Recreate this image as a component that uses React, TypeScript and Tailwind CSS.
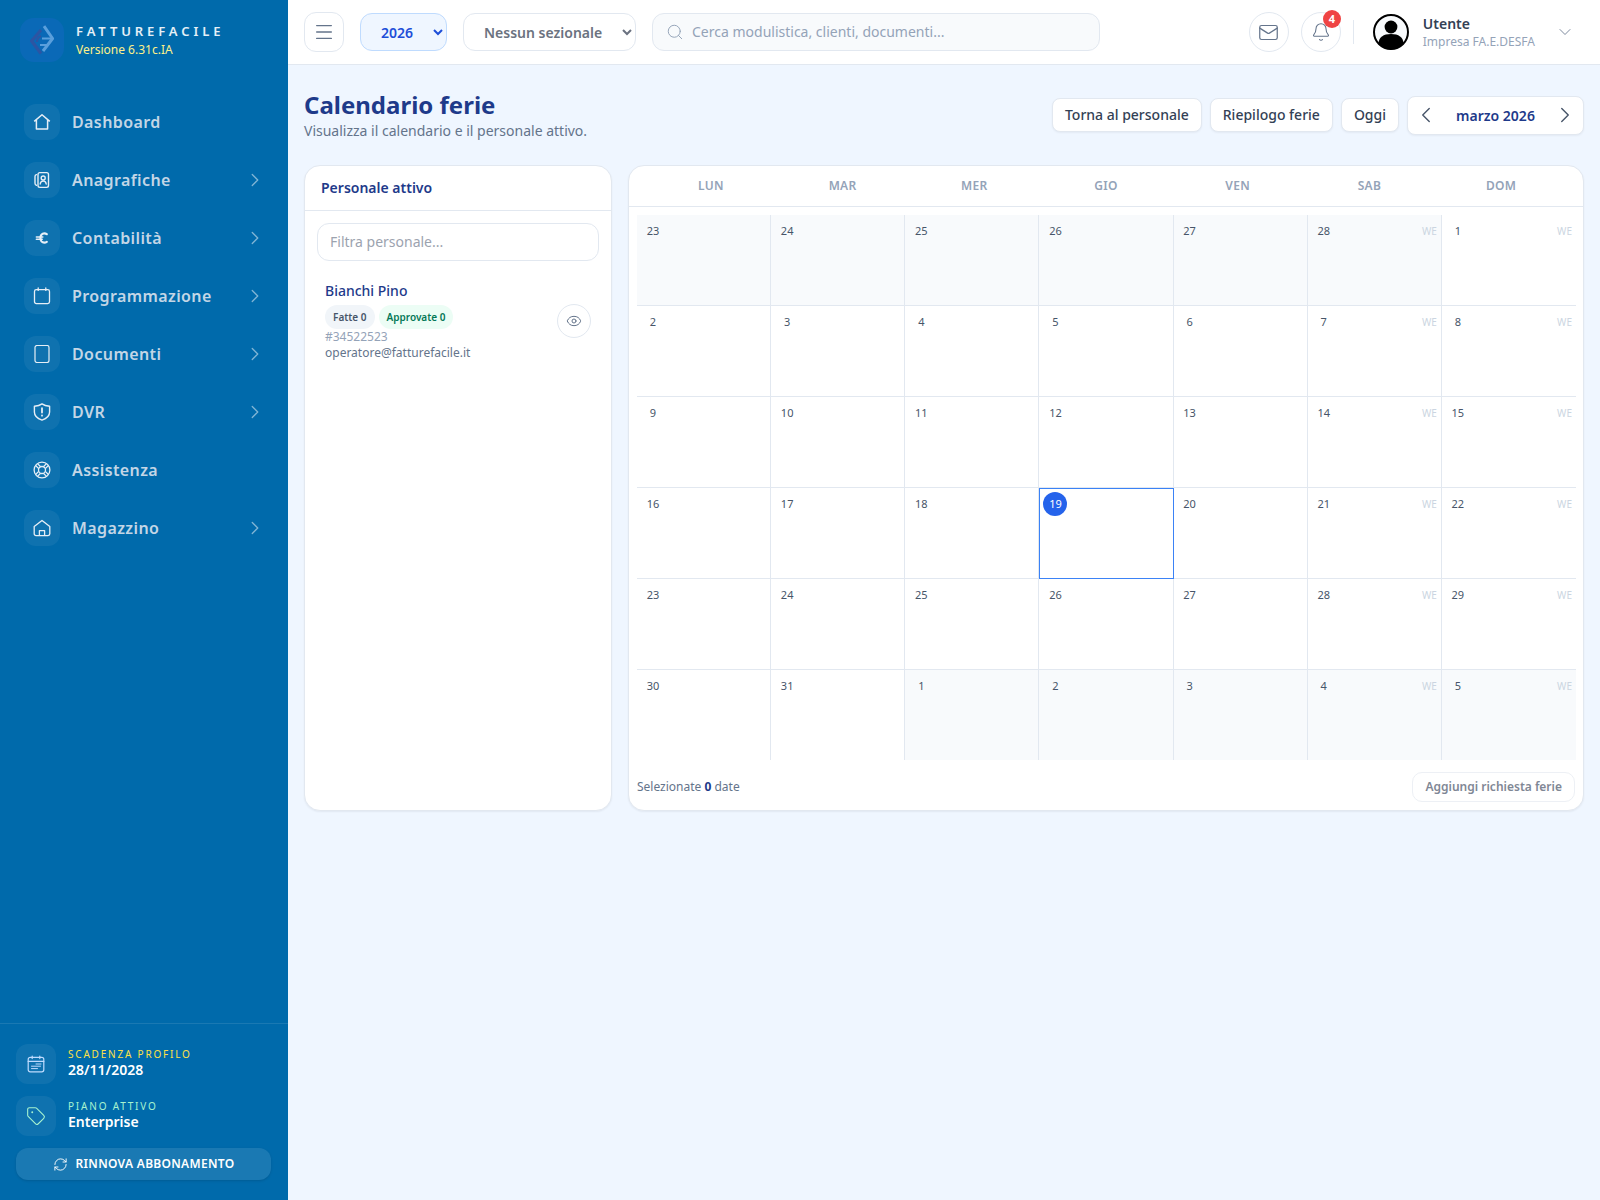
import React from "react"
import {
  Bell,
  ChevronDown,
  ChevronLeft,
  ChevronRight,
  Eye,
  Mail,
  Menu,
  RefreshCw,
  Search,
  Tag,
} from "lucide-react"

const HomeIcon = () => (
  <svg width="18" height="18" viewBox="0 0 18 18" fill="none" stroke="currentColor" strokeWidth="1.5" strokeLinejoin="round">
    <path d="M1.2 8.4 9 1.8l7.8 6.6M3.4 7v9h11.2V7" />
  </svg>
)

const ContactIcon = () => (
  <svg width="18" height="18" viewBox="0 0 18 18" fill="none" stroke="currentColor" strokeWidth="1.4" strokeLinecap="round" strokeLinejoin="round">
    <path d="M3.4 3.6C2.3 3.8 2 4.5 2 5.5v6.8c0 1.1.3 1.8 1.4 2" />
    <rect x="5" y="1.6" width="10.5" height="14.8" rx="1.8" />
    <circle cx="10.2" cy="7" r="2" />
    <path d="M7.2 13c.3-2 1.4-3 3-3s2.7 1 3 3" />
  </svg>
)

const EuroIcon = () => (
  <svg width="18" height="18" viewBox="0 0 18 18" fill="none" stroke="currentColor" strokeWidth="2.2" strokeLinecap="round">
    <path d="M13.8 5.2C12.9 4.6 12.1 4.4 11.3 4.4c-2.3 0-3.9 2-3.9 4.6s1.6 4.6 3.9 4.6c.8 0 1.6-.2 2.5-.8" />
    <path d="M3.4 8h6.4M3.4 10.2h5.8" strokeWidth="1.6" />
  </svg>
)

const CalendarBlankIcon = () => (
  <svg width="18" height="18" viewBox="0 0 18 18" fill="none" stroke="currentColor" strokeWidth="1.3" strokeLinecap="round">
    <rect x="1.5" y="2.6" width="15" height="14" rx="1.8" />
    <path d="M5.2 1v2.4M12.8 1v2.4" />
  </svg>
)

const DocIcon = () => (
  <svg width="18" height="18" viewBox="0 0 18 18" fill="none" stroke="currentColor" strokeWidth="1.2">
    <rect x="2" y="0.5" width="14" height="17" rx="2" />
  </svg>
)

const ShieldIcon = () => (
  <svg width="18" height="18" viewBox="0 0 18 18" fill="none" stroke="currentColor" strokeWidth="1.4" strokeLinecap="round" strokeLinejoin="round">
    <path d="M9 .9c2 1.6 4.5 2.3 7.6 2.4V9c0 4-3 6.6-7.6 8.1C4.4 15.6 1.4 13 1.4 9V3.3C4.5 3.2 7 2.5 9 .9z" />
    <path d="M9 5.2v4.4M9 12.4v.3" strokeWidth="1.8" />
  </svg>
)

const BuoyIcon = () => (
  <svg width="18" height="18" viewBox="0 0 18 18" fill="none" stroke="currentColor" strokeWidth="1.3">
    <circle cx="9" cy="9" r="7.9" />
    <circle cx="9" cy="9" r="3.5" />
    {[0, 90, 180, 270].map((deg) => (
      <g key={deg} transform={`rotate(${deg} 9 9)`}>
        <path d="M10.4 12.25 13.5 15.4M12.25 10.4 15.4 13.5" />
      </g>
    ))}
  </svg>
)

const WarehouseIcon = () => (
  <svg width="18" height="18" viewBox="0 0 18 18" fill="none" stroke="currentColor" strokeWidth="1.3" strokeLinejoin="round">
    <path d="M1.2 7.6 9 1.4l7.8 6.2v7.2a1.8 1.8 0 0 1-1.8 1.8H3a1.8 1.8 0 0 1-1.8-1.8z" />
    <path d="M6.4 16.6v-5h5.2v5" />
  </svg>
)

const PlannerIcon = () => (
  <svg width="18" height="18" viewBox="0 0 18 18" fill="none" stroke="currentColor" strokeWidth="1.2" strokeLinecap="round">
    <rect x="1.2" y="2.4" width="15.6" height="14.4" rx="2" />
    <path d="M1.2 6.4h15.6M5.2 1v2.6M12.8 1v2.6" />
    <path d="M9 9h5M4.5 11.2h9M4.5 13.6h6" strokeWidth="1" />
  </svg>
)

const Logo = () => (
  <svg width="24" height="30" viewBox="0 0 24 30" fill="none">
    <path d="M11 5 1.6 16 11 28.5" stroke="#2c55a3" strokeWidth="3.2" strokeLinejoin="round" />
    <path d="M14 1.2 22.6 13.5 13 26" stroke="#5a9fdc" strokeWidth="3" strokeLinejoin="round" />
    <path d="M12 13.5h9M10 20h8" stroke="#5a9fdc" strokeWidth="2.2" />
    <path d="M7 17c0-3 1.5-5 4-6" stroke="#2c55a3" strokeWidth="2.2" />
  </svg>
)

const nav = [
  { label: "Dashboard", icon: <HomeIcon /> },
  { label: "Anagrafiche", icon: <ContactIcon />, more: true },
  { label: "Contabilità", icon: <EuroIcon />, more: true },
  { label: "Programmazione", icon: <CalendarBlankIcon />, more: true },
  { label: "Documenti", icon: <DocIcon />, more: true },
  { label: "DVR", icon: <ShieldIcon />, more: true },
  { label: "Assistenza", icon: <BuoyIcon /> },
  { label: "Magazzino", icon: <WarehouseIcon />, more: true },
]

const Sidebar = () => (
  <aside className="w-[288px] shrink-0 bg-[#006aab] flex flex-col">
    <div className="pt-[18px] pl-5 flex items-center gap-3">
      <div className="w-11 h-11 rounded-[14px] bg-[#0a69b7] flex items-center justify-center">
        <Logo />
      </div>
      <div>
        <div className="text-[13px] leading-[17px] font-semibold tracking-[0.3em] text-white/90">FATTUREFACILE</div>
        <div className="mt-[2px] text-[12px] leading-[16px] text-[#fdf08a]">Versione 6.31c.IA</div>
      </div>
    </div>

    <nav className="mt-[31px]">
      {nav.map((item) => (
        <div key={item.label} className="flex items-center gap-3 pl-6 pr-[22px] py-[11px]">
          <div className="w-9 h-9 rounded-xl bg-white/[0.06] flex items-center justify-center text-[#e6eef6]">
            {item.icon}
          </div>
          <span className="text-[16px] font-semibold tracking-[0.025em] text-[#c3d6e6]">{item.label}</span>
          {item.more && <ChevronRight size={22} strokeWidth={1.4} className="ml-auto text-white/50" />}
        </div>
      ))}
    </nav>

    <div className="mt-auto border-t border-white/10 px-4 pt-5 pb-5 flex flex-col gap-3">
      <div className="flex items-center gap-3">
        <div className="w-10 h-10 rounded-xl bg-white/[0.06] flex items-center justify-center text-[#bfdbfe]">
          <PlannerIcon />
        </div>
        <div className="-mt-[2px]">
          <div className="text-[10px] leading-[14px] tracking-[0.18em] text-[#fde047]">SCADENZA PROFILO</div>
          <div className="text-[14px] leading-[18px] font-semibold text-white">28/11/2028</div>
        </div>
      </div>
      <div className="flex items-center gap-3">
        <div className="w-10 h-10 rounded-xl bg-white/[0.06] flex items-center justify-center text-[#a7f3d0]">
          <Tag size={20} strokeWidth={1.3} />
        </div>
        <div className="-mt-[2px]">
          <div className="text-[10px] leading-[14px] tracking-[0.18em] text-[#a7f3d0]">PIANO ATTIVO</div>
          <div className="text-[14px] leading-[18px] font-semibold text-white">Enterprise</div>
        </div>
      </div>
      <button className="h-8 w-[255px] rounded-xl bg-white/10 shadow-sm flex items-center justify-center gap-2 text-[12px] font-semibold tracking-[0.025em] text-white">
        <RefreshCw size={15} strokeWidth={1.5} />
        RINNOVA ABBONAMENTO
      </button>
    </div>
  </aside>
)

const Topbar = () => (
  <header className="h-[65px] shrink-0 bg-white border-b border-[#e2e8f0] flex items-center pl-4 pr-[25px]">
    <button className="w-10 h-10 rounded-xl border border-[#e2e8f0] flex items-center justify-center text-[#64748b]">
      <Menu size={22} strokeWidth={1.5} />
    </button>
    <select className="ml-4 w-[87px] h-[38px] pl-4 rounded-xl border border-[#bfdbfe] bg-[#eff6ff] text-[14px] font-semibold text-[#1d4ed8]">
      <option>2026</option>
    </select>
    <select className="ml-4 w-[173px] h-[38px] pl-4 rounded-xl border border-[#e2e8f0] bg-white text-[14px] font-semibold text-[#6b7280]">
      <option>Nessun sezionale</option>
    </select>
    <div className="ml-4 w-[448px] h-[38px] rounded-xl border border-[#e2e8f0] bg-[#f8fafc] flex items-center gap-2 pl-[13px]">
      <Search size={18} strokeWidth={1.3} className="text-[#94a3b8]" />
      <input placeholder="Cerca modulistica, clienti, documenti..." className="flex-1 bg-transparent text-[14px] pb-px outline-none placeholder:text-[#94a3b8]" />
    </div>
    <button className="ml-auto w-10 h-10 rounded-full border border-[#e2e8f0] flex items-center justify-center text-[#64748b]">
      <Mail size={21} strokeWidth={1.4} />
    </button>
    <button className="relative ml-3 w-10 h-10 rounded-full border border-[#e2e8f0] flex items-center justify-center text-[#64748b]">
      <Bell size={20} strokeWidth={1.3} />
      <span className="absolute -top-[3px] -right-px w-[18px] h-[18px] rounded-full bg-[#ef4444] flex items-center justify-center text-[11px] font-bold text-white">4</span>
    </button>
    <div className="ml-3 w-px h-6 bg-[#e2e8f0]" />
    <svg width="36" height="36" viewBox="0 0 36 36" className="ml-[19px]">
      <circle cx="18" cy="18" r="17" fill="#f8fafc" stroke="#000" strokeWidth="2" />
      <circle cx="18" cy="13" r="6.4" fill="#000" />
      <path d="M5.5 30c0-7 5-10 12.5-10s12.5 3 12.5 10a17 17 0 0 1-25 0z" fill="#000" />
    </svg>
    <div className="ml-[14px]">
      <div className="text-[14px] leading-[19px] font-semibold text-[#334155]">Utente</div>
      <div className="text-[12px] leading-[17px] text-[#94a3b8]">Impresa FA.E.DESFA</div>
    </div>
    <ChevronDown size={20} strokeWidth={1} className="ml-5 text-[#64748b]" />
  </header>
)

const PlainButton = ({ children }: { children: React.ReactNode }) => (
  <button className="h-[34px] px-3 pb-[2px] rounded-lg border border-[#e2e8f0] bg-white text-[14px] font-medium text-[#334155] shadow-[0_1px_2px_rgba(15,23,42,0.05)]">
    {children}
  </button>
)

const PersonnelCard = () => (
  <section className="w-[308px] shrink-0 rounded-2xl border border-[#e2e8f0] bg-white shadow-[0_1px_2px_rgba(15,23,42,0.06)] flex flex-col">
    <div className="h-[45px] px-4 pb-[2px] flex items-center border-b border-[#e2e8f0] text-[14px] font-semibold text-[#1e3a8a]">
      Personale attivo
    </div>
    <div className="px-3 pt-3">
      <input
        placeholder="Filtra personale..."
        className="w-full h-[38px] rounded-xl border border-[#e2e8f0] px-3 pb-[2px] text-[14px] outline-none placeholder:text-[#9ca3af]"
      />
    </div>
    <div className="mt-5 pl-5 pr-5 flex items-center justify-between">
      <div>
        <div className="text-[14px] leading-[20px] font-medium text-[#1e3a8a]">Bianchi Pino</div>
        <div className="mt-[4px] flex gap-[4px]">
          <span className="h-6 px-2 rounded-full bg-[#f1f5f9] flex items-center text-[10px] font-semibold text-[#475569]">Fatte 0</span>
          <span className="h-6 px-2 rounded-full bg-[#ecfdf5] flex items-center text-[10px] font-semibold text-[#047857]">Approvate 0</span>
        </div>
        <div className="text-[12px] leading-[16px] text-[#94a3b8]">#34522523</div>
        <div className="text-[12px] leading-[16px] text-[#64748b]">operatore@fatturefacile.it</div>
      </div>
      <button className="w-[34px] h-[34px] rounded-full border border-[#e2e8f0] flex items-center justify-center text-[#64748b]">
        <Eye size={16} strokeWidth={1.5} />
      </button>
    </div>
  </section>
)

const dayNames = ["LUN", "MAR", "MER", "GIO", "VEN", "SAB", "DOM"]

// first row and the trailing days belong to the months around march
const weeks = [
  [23, 24, 25, 26, 27, 28, 1],
  [2, 3, 4, 5, 6, 7, 8],
  [9, 10, 11, 12, 13, 14, 15],
  [16, 17, 18, 19, 20, 21, 22],
  [23, 24, 25, 26, 27, 28, 29],
  [30, 31, 1, 2, 3, 4, 5],
]

const isOutside = (w: number, d: number) => (w === 0 && d < 6) || (w === 5 && d > 1)

const CalendarCard = () => (
  <section className="flex-1 rounded-2xl border border-[#e2e8f0] bg-white shadow-[0_1px_2px_rgba(15,23,42,0.06)]">
    <div className="h-[41px] px-4 grid grid-cols-7 items-center border-b border-[#e2e8f0]">
      {dayNames.map((d) => (
        <div key={d} className="text-center text-[12px] font-semibold tracking-[0.025em] text-[#94a3b8]">{d}</div>
      ))}
    </div>
    <div className="ml-2 mr-[7px] mt-2 grid grid-cols-7">
      {weeks.map((week, w) =>
        week.map((day, d) => {
          const today = w === 3 && d === 3
          return (
            <div
              key={`${w}-${d}`}
              className={`relative p-1 ${w < 5 ? "h-[91px] border-b" : "h-[90px]"} ${d < 6 ? "border-r" : ""} border-[#e2e8f0] ${isOutside(w, d) ? "bg-[#f8fafc]" : "bg-white"} ${today ? "outline outline-[1.5px] -outline-offset-1 outline-[#3b82f6]" : ""}`}
            >
              <div className={`w-6 h-6 rounded-full flex items-center justify-center text-[11px] ${today ? "bg-[#2563eb] text-white" : "text-[#475569]"}`}>
                {day}
              </div>
              {d > 4 && <span className="absolute top-[9px] right-1 text-[10px] leading-[14px] text-[#cbd5e1]">WE</span>}
            </div>
          )
        })
      )}
    </div>
    <div className="mx-2 mt-[2px] h-[49px] flex items-center justify-between">
      <div className="text-[12px] text-[#64748b]">
        Selezionate <span className="font-bold text-[#1e3a8a]">0</span> date
      </div>
      <button className="h-[30px] px-3 rounded-[10px] border border-[#edf0f5] bg-white text-[12px] font-semibold text-[#7f8795]">
        Aggiungi richiesta ferie
      </button>
    </div>
  </section>
)

export default function App() {
  return (
    <div className="h-[1200px] flex bg-[#eff6ff] font-['Noto_Sans',sans-serif]">
      <Sidebar />
      <div className="flex-1 flex flex-col min-w-0">
        <Topbar />
        <main className="pt-6 px-4">
          <div className="flex items-center justify-between">
            <div>
              <h1 className="text-[24px] leading-[32px] font-bold text-[#1e3a8a]">Calendario ferie</h1>
              <p className="text-[14px] leading-[20px] text-[#64748b]">Visualizza il calendario e il personale attivo.</p>
            </div>
            <div className="flex items-center gap-2">
              <PlainButton>Torna al personale</PlainButton>
              <PlainButton>Riepilogo ferie</PlainButton>
              <PlainButton>Oggi</PlainButton>
              <div className="w-[177px] h-[39px] rounded-lg border border-[#e2e8f0] bg-white shadow-[0_1px_2px_rgba(15,23,42,0.05)] flex items-center justify-between px-[5px]">
                <ChevronLeft size={26} strokeWidth={1.3} className="text-[#475569]" />
                <span className="text-[14px] font-semibold text-[#1e3a8a]">marzo 2026</span>
                <ChevronRight size={26} strokeWidth={1.3} className="text-[#475569]" />
              </div>
            </div>
          </div>
          <div className="mt-6 h-[646px] flex gap-4">
            <PersonnelCard />
            <CalendarCard />
          </div>
        </main>
      </div>
    </div>
  )
}
